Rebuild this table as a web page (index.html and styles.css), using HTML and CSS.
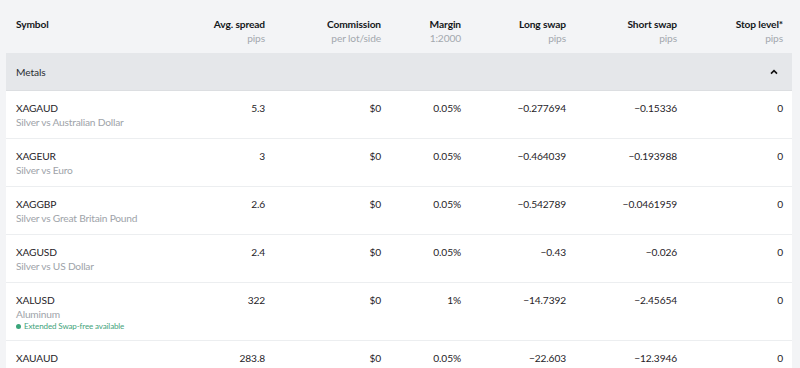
FILE: index.html
```html
<!DOCTYPE html>
<html lang="en">
<head>
<meta charset="utf-8">
<link rel="stylesheet" href="styles.css">
</head>
<body>
<div class="page">
  <div class="table">
    <div class="row head">
      <div class="cell sym"><div class="h">Symbol</div></div>
      <div class="cell num"><div class="h">Avg. spread</div><div class="hs">pips</div></div>
      <div class="cell num"><div class="h">Commission</div><div class="hs">per lot/side</div></div>
      <div class="cell num"><div class="h">Margin</div><div class="hs">1:2000</div></div>
      <div class="cell num"><div class="h">Long swap</div><div class="hs">pips</div></div>
      <div class="cell num"><div class="h">Short swap</div><div class="hs">pips</div></div>
      <div class="cell num"><div class="h">Stop level*</div><div class="hs">pips</div></div>
    </div>
    <div class="group">
      <span>Metals</span>
      <svg class="chev" width="8" height="6" viewBox="0 0 8 6"><path d="M1 4.6 L4 1.6 L7 4.6" fill="none" stroke="#111" stroke-width="1.6"/></svg>
    </div>
    <div class="row item">
      <div class="cell sym"><div class="name">XAGAUD</div><div class="desc">Silver vs Australian Dollar</div></div>
      <div class="cell num">5.3</div><div class="cell num">$0</div><div class="cell num">0.05%</div>
      <div class="cell num">−0.277694</div><div class="cell num">−0.15336</div><div class="cell num">0</div>
    </div>
    <div class="row item">
      <div class="cell sym"><div class="name">XAGEUR</div><div class="desc">Silver vs Euro</div></div>
      <div class="cell num">3</div><div class="cell num">$0</div><div class="cell num">0.05%</div>
      <div class="cell num">−0.464039</div><div class="cell num">−0.193988</div><div class="cell num">0</div>
    </div>
    <div class="row item">
      <div class="cell sym"><div class="name">XAGGBP</div><div class="desc">Silver vs Great Britain Pound</div></div>
      <div class="cell num">2.6</div><div class="cell num">$0</div><div class="cell num">0.05%</div>
      <div class="cell num">−0.542789</div><div class="cell num">−0.0461959</div><div class="cell num">0</div>
    </div>
    <div class="row item">
      <div class="cell sym"><div class="name">XAGUSD</div><div class="desc">Silver vs US Dollar</div></div>
      <div class="cell num">2.4</div><div class="cell num">$0</div><div class="cell num">0.05%</div>
      <div class="cell num">−0.43</div><div class="cell num">−0.026</div><div class="cell num">0</div>
    </div>
    <div class="row item">
      <div class="cell sym"><div class="name">XALUSD</div><div class="desc">Aluminum</div><div class="swapfree"><span class="dot"></span>Extended Swap-free available</div></div>
      <div class="cell num">322</div><div class="cell num">$0</div><div class="cell num">1%</div>
      <div class="cell num">−14.7392</div><div class="cell num">−2.45654</div><div class="cell num">0</div>
    </div>
    <div class="row item">
      <div class="cell sym"><div class="name">XAUAUD</div><div class="desc">&nbsp;</div></div>
      <div class="cell num">283.8</div><div class="cell num">$0</div><div class="cell num">0.05%</div>
      <div class="cell num">−22.603</div><div class="cell num">−12.3946</div><div class="cell num">0</div>
    </div>
  </div>
</div>
</body>
</html>
```
FILE: styles.css
```css
html, body {
  margin: 0;
  padding: 0;
  background: #f3f4f6;
}
body {
  font-family: Lato, "Noto Sans", sans-serif;
  font-size: 10.2px;
  letter-spacing: -0.12px;
  color: #1f2328;
}
.page {
  padding: 0 8px 0 6px;
}
.table {
  display: flex;
  flex-direction: column;
}
.row {
  display: grid;
  grid-template-columns: 149px 100px 116px 80px 105px 111px 106px;
  padding: 0 9px 0 10px;
}
.cell.num {
  text-align: right;
  line-height: 14px;
}
.head {
  padding-top: 17px;
  padding-bottom: 8px;
}
.h {
  font-weight: 700;
  line-height: 14px;
  color: #14171a;
}
.hs {
  line-height: 14px;
  color: #a3a8ae;
}
.group {
  background: #e5e7ea;
  height: 37px;
  display: flex;
  align-items: center;
  justify-content: space-between;
  padding: 0 14px 0 10px;
  border-bottom: 1px solid #dcdee1;
  color: #2a2e33;
}
.item {
  background: #fff;
  padding-top: 10px;
  padding-bottom: 9px;
  border-bottom: 1px solid #eceef0;
}
.name {
  line-height: 14px;
}
.desc {
  line-height: 14px;
  color: #9ea3a9;
  letter-spacing: -0.2px;
}
.swapfree {
  line-height: 10px;
  font-size: 8px;
  color: #3fa37b;
  display: flex;
  align-items: center;
}
.dot {
  width: 5px;
  height: 5px;
  border-radius: 50%;
  background: #3aa57a;
  margin-right: 3px;
}
```
